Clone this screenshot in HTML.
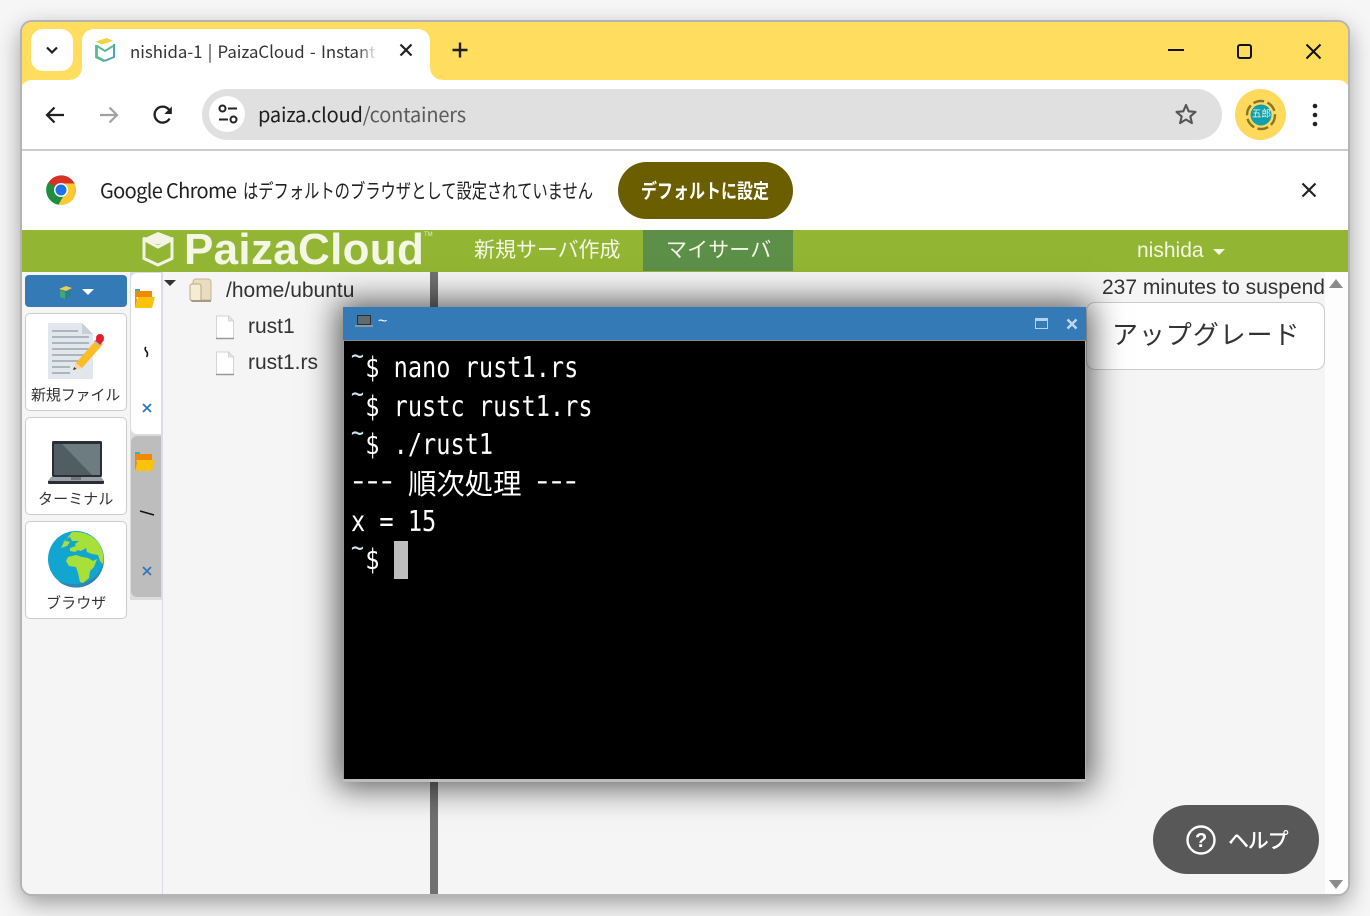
<!DOCTYPE html>
<html lang="ja"><head><meta charset="utf-8"><title>PaizaCloud</title>
<style>
html,body{margin:0;padding:0;width:1370px;height:916px;overflow:hidden;background:#f6f6f6}
*{box-sizing:border-box}
.a{position:absolute}
.t{position:absolute;white-space:nowrap;line-height:1}
.ui{font-family:"Noto Sans CJK JP","Liberation Sans",sans-serif}
.ls{font-family:"Liberation Sans","Noto Sans CJK JP",sans-serif}
.card{position:absolute;left:25px;width:102px;height:98px;background:#fff;border:1px solid #ccc;border-radius:5px}
.term{position:absolute;font-family:"DejaVu Sans Mono",monospace;font-size:28.5px;line-height:1;color:#fff;white-space:pre;transform-origin:0 0;transform:scaleX(.828)}
.tl{display:inline-block;width:17.16px;font-size:26px;position:relative;top:-13.7px;line-height:1;color:#cfe6f2}
.dash{letter-spacing:-5.3px;transform:scaleX(1.2)}
svg{position:absolute;overflow:visible}
</style></head><body>
<div class="a" style="left:21px;top:21px;width:1328px;height:874px;border-radius:11px;box-shadow:0 8px 24px rgba(0,0,0,.38)"></div>
<div class="a" id="win" style="left:20px;top:20px;width:1330px;height:876px;border:2px solid #b4b4b4;border-radius:12px;overflow:hidden;background:#f5f5f5">
<div style="position:absolute;left:-22px;top:-22px;width:1370px;height:916px">

<!-- title bar -->
<div class="a" style="left:20px;top:20px;width:1330px;height:70px;background:#ffdd5e"></div>
<!-- toolbar + infobar -->
<div class="a" style="left:20px;top:80px;width:1330px;height:150px;background:#fff;border-radius:12px 12px 0 0"></div>
<div class="a" style="left:20px;top:149px;width:1330px;height:2px;background:#ccc"></div>

<!-- tab list button -->
<div class="a" style="left:31px;top:29px;width:42px;height:42px;background:#fff;border-radius:12px"></div>
<svg style="left:31px;top:29px" width="42" height="42"><path d="M16 18.5l5 5 5-5" fill="none" stroke="#1f1f1f" stroke-width="2.2"/></svg>
<!-- tab -->
<div class="a" style="left:82px;top:29px;width:348px;height:51px;background:#fff;border-radius:12px 12px 0 0"></div>
<div class="a" style="left:70px;top:68px;width:12px;height:12px;background:radial-gradient(circle at 0 0,#ffdd5e 11.5px,#fff 12px)"></div>
<div class="a" style="left:430px;top:68px;width:12px;height:12px;background:radial-gradient(circle at 100% 0,#ffdd5e 11.5px,#fff 12px)"></div>
<svg style="left:94px;top:37px" width="24" height="26" viewBox="0 0 24 26">
<path d="M2.500 8v12l8 4" fill="none" stroke="#58bd8c" stroke-width="2.800"/>
<path d="M10.500 24l9.500-4V7" fill="none" stroke="#4aa7bb" stroke-width="2"/>
<path d="M3 9l8 5 8-5" fill="none" stroke="#58bd8c" stroke-width="2"/>
<path d="M1.500 4.500L13 1l6 3-11 3.500z" fill="#f2d33c"/>
</svg>
<div class="t ui" style="left:130px;top:43px;font-size:16.800px;word-spacing:1.500px;color:#333;width:247px;overflow:hidden;height:24px;-webkit-mask-image:linear-gradient(90deg,#000 92%,transparent)">nishida-1 | PaizaCloud - Instant Cloud</div>
<svg style="left:398px;top:42px" width="16" height="16"><path d="M2.5 2.5l11 11M13.5 2.5l-11 11" stroke="#1f1f1f" stroke-width="2.2"/></svg>
<svg style="left:452px;top:42px" width="16" height="16"><path d="M8 .5v15M.5 8h15" stroke="#1f1f1f" stroke-width="2.4"/></svg>
<!-- window controls -->
<div class="a" style="left:1168px;top:49px;width:16px;height:2px;background:#111"></div>
<div class="a" style="left:1237px;top:44px;width:15px;height:15px;border:2px solid #111;border-radius:3px"></div>
<svg style="left:1305px;top:43px" width="17" height="17"><path d="M1.5 1.5l14 14M15.5 1.5l-14 14" stroke="#111" stroke-width="2"/></svg>

<!-- nav -->
<svg style="left:44px;top:104px" width="22" height="22"><path d="M20 11H3M10.5 3.5L3 11l7.500 7.500" fill="none" stroke="#1f1f1f" stroke-width="2.200"/></svg>
<svg style="left:98px;top:104px" width="22" height="22"><path d="M2 11h17M11.500 3.500L19 11l-7.500 7.500" fill="none" stroke="#a2a2a2" stroke-width="2.200"/></svg>
<svg style="left:152px;top:104px" width="22" height="22" viewBox="0 0 22 22"><path d="M17.600 14.500A8 8 0 1 1 16.500 5.200L19 7.500" fill="none" stroke="#1f1f1f" stroke-width="2.300"/><path d="M19.800 2.500v7.500h-7.500z" fill="#1f1f1f"/></svg>
<div class="a" style="left:202px;top:89px;width:1020px;height:51px;background:#e0e0e0;border-radius:26px"></div>
<div class="a" style="left:209px;top:96px;width:36px;height:36px;background:#fff;border-radius:50%"></div>
<svg style="left:209px;top:96px" width="36" height="36"><circle cx="13.500" cy="12.500" r="3" fill="none" stroke="#222" stroke-width="2"/><path d="M19 12.500h9M10 23.500h9" stroke="#222" stroke-width="2"/><circle cx="24.500" cy="23.500" r="3" fill="none" stroke="#222" stroke-width="2"/></svg>
<div class="t ui" style="left:258px;top:103.500px;font-size:20px;letter-spacing:-.2px;color:#1f1f1f">paiza.cloud<span style="color:#5c5c5c">/containers</span></div>
<svg style="left:1174px;top:102px" width="24" height="24" viewBox="0 0 24 24"><path d="M12 3l2.700 6.300 6.800.6-5.200 4.500 1.600 6.700L12 17.500l-5.900 3.600 1.600-6.700L2.500 9.900l6.800-.6z" fill="none" stroke="#555" stroke-width="2.100" stroke-linejoin="round"/></svg>
<div class="a" style="left:1235px;top:89px;width:51px;height:51px;background:#ffd95c;border-radius:50%"></div>
<svg style="left:1235px;top:89px" width="51" height="51"><circle cx="26" cy="26" r="14" fill="none" stroke="#8a7328" stroke-width="2.400" stroke-dasharray="11 3.500"/><circle cx="26" cy="26" r="10.500" fill="#0f9fae"/></svg>
<div class="t ui" style="left:1252px;top:109px;font-size:9.500px;color:#e6f5e6">五郎</div>
<svg style="left:1305px;top:102px" width="20" height="26"><circle cx="10" cy="4" r="2.300" fill="#222"/><circle cx="10" cy="13" r="2.300" fill="#222"/><circle cx="10" cy="22" r="2.300" fill="#222"/></svg>

<!-- infobar -->
<svg style="left:46px;top:175px" width="30" height="30" viewBox="0 0 30 30">
<path d="M15 15L2.200 8A15 15 0 0 1 28.600 8.500H15z" fill="#d93025"/>
<path d="M15 15L2.200 7.500A15 15 0 0 0 12.500 29.800L19 19z" fill="#1e8e3e"/>
<path d="M15 8.500h13.600A15 15 0 0 1 12.500 29.800L21 15z" fill="#fcc934"/>
<circle cx="15" cy="15" r="7" fill="#fff"/><circle cx="15" cy="15" r="5.500" fill="#1a73e8"/>
</svg>
<div class="t ui" style="left:100px;top:180px;font-size:20px;color:#202020;letter-spacing:-.65px">Google Chrome</div>
<div class="t ui" style="left:243px;top:180px;font-size:20px;color:#202020;transform-origin:0 0;transform:scaleX(.764)">はデフォルトのブラウザとして設定されていません</div>
<div class="a" style="left:618px;top:162px;width:175px;height:57px;background:#6b5e00;border-radius:29px"></div>
<div class="t ui" style="left:641px;top:180px;font-size:20px;font-weight:700;color:#fff;transform-origin:0 0;transform:scaleX(.8)">デフォルトに設定</div>
<svg style="left:1301px;top:182px" width="16" height="16"><path d="M1.500 1.500l13 13M14.500 1.500l-13 13" stroke="#1f1f1f" stroke-width="2.100"/></svg>

<!-- green navbar -->
<div class="a" style="left:20px;top:230px;width:1330px;height:42px;background:#93b534"></div>
<div class="a" style="left:643px;top:230px;width:150px;height:41px;background:#5c8f47"></div>
<svg style="left:142px;top:231px" width="32" height="36" viewBox="0 0 32 36">
<path d="M16 12L2 7.500v20L16 34l14-6.500v-20z" fill="none" stroke="#f2f5e4" stroke-width="3" stroke-linejoin="round"/>
<path d="M2 7.500L16 1l13 5-13 6.500z" fill="#f2f5e4"/>
<path d="M3 9l13 7 13-7" fill="none" stroke="#f2f5e4" stroke-width="3"/>
</svg>
<div class="t ls" style="left:184px;top:227.500px;font-size:44px;font-weight:700;color:#f4f6e6;letter-spacing:.3px">PaizaCloud</div>
<div class="t ls" style="left:424px;top:232px;font-size:6px;color:#e6ecc8">TM</div>
<div class="t ui" style="left:474px;top:239px;font-size:21px;color:#f4f6e6;letter-spacing:-.05px">新規サーバ作成</div>
<div class="t ui" style="left:666px;top:239px;font-size:21px;color:#f4f6e6;letter-spacing:.1px">マイサーバ</div>
<div class="t ls" style="left:1137px;top:239.500px;font-size:21px;color:#f4f6e6">nishida</div>
<div class="a" style="left:1213px;top:249px;border:6px solid transparent;border-top:6px solid #f4f6e6;border-bottom:0"></div>

<!-- content -->
<div class="a" style="left:20px;top:272px;width:1330px;height:630px;background:#f5f5f5"></div>
<div class="a" style="left:1325px;top:272px;width:25px;height:630px;background:#fdfdfd"></div>
<div class="a" style="left:162px;top:272px;width:1px;height:630px;background:#dcdce8"></div>
<div class="a" style="left:430px;top:272px;width:8px;height:630px;background:#707070"></div>

<!-- left menu -->
<div class="a" style="left:25px;top:275px;width:102px;height:32px;background:#337ab7;border-radius:4px"></div>
<svg style="left:58px;top:284px" width="16" height="16"><path d="M1 5l7-3 6 2-6 3z" fill="#e8d24a"/><path d="M2 6l5 2v7l-5-2z" fill="#3fa873"/><path d="M8 8l5-2v6l-5 3z" fill="#2c7f8f"/></svg>
<div class="a" style="left:82px;top:289px;border:6px solid transparent;border-top:6px solid #fff;border-bottom:0"></div>

<div class="card" style="top:313px"></div>
<svg style="left:48px;top:323px" width="56" height="56" viewBox="0 0 56 56">
<path d="M0 0h34l11 11v45H0z" fill="#e1e7ec"/><path d="M34 0l11 11H34z" fill="#c5d0d8"/>
<g stroke="#99a6ae" stroke-width="1.500"><path d="M4 8h26M4 14h37M4 20h37M4 26h37M4 32h37M4 38h26M4 44h18M4 50h18"/></g>
<path d="M25 47l3-7 21-24 6 5-21 24z" fill="#fbbc24"/><path d="M25 47l3-7 6 5z" fill="#f5d3ae"/><path d="M25 47l1.200-3 2.300 2z" fill="#333"/>
<path d="M47 18l4-5 5 4-4 5z" fill="#e2202c"/><circle cx="52" cy="15" r="4" fill="#e2202c"/><path d="M46 18l5 4" stroke="#bbb" stroke-width="2"/>
</svg>
<div class="t ui" style="left:31px;top:387px;font-size:15px;color:#333;letter-spacing:-.15px">新規ファイル</div>

<div class="card" style="top:417px"></div>
<svg style="left:48px;top:440px" width="56" height="44" viewBox="0 0 56 44">
<rect x="4" y="1" width="50" height="36" rx="1.500" fill="#2c2d36"/>
<rect x="6" y="4" width="46" height="31" fill="#505d62"/><path d="M14 4h38v31H44z" fill="#6d7c80"/>
<path d="M3 37h50l3 4a2 2 0 0 1-2 2H2a2 2 0 0 1-2-2z" fill="#9aa1a6"/><path d="M0 41h56v2a1 1 0 0 1-1 1H1a1 1 0 0 1-1-1z" fill="#2c2d36"/><rect x="23" y="37" width="10" height="3" fill="#70767a"/>
</svg>
<div class="t ui" style="left:38px;top:491px;font-size:15px;color:#333;letter-spacing:.1px">ターミナル</div>

<div class="card" style="top:521px"></div>
<svg style="left:48px;top:531px" width="56" height="56" viewBox="0 0 56 56">
<circle cx="28" cy="28" r="28" fill="#12a5cf"/>
<path d="M10 50A28 28 0 0 0 56 28c-2 14-12 24-28 25-7 .3-13-1-18-3z" fill="#2c86b8"/>
<path d="M24 1c10-1 22 3 28 13 3 6 4 12 3 19l-3-3-2-6-6-1-5-2-1-4-5 3-4-1-2-6 4-3-7 0-2-4-4 2-3 3 4-1 3 1-3 4-6 2 3-6z" fill="#a8e03a"/>
<path d="M20 26l8-2 6 2 6 1 5 3 4-2-3 8-4 4-1 7-6 5-3-1-2-9-2-6-7-1-3-5z" fill="#a8e03a"/>
<path d="M22 17l6-2 3 3-4 3-5-1z" fill="#a8e03a"/>
</svg>
<div class="t ui" style="left:46px;top:595px;font-size:15px;color:#333;letter-spacing:.1px">ブラウザ</div>

<!-- vertical tabs -->
<div class="a" style="left:130px;top:272px;width:32px;height:328px;background:#dcdcdc"></div>
<div class="a" style="left:131px;top:273px;width:30px;height:161px;background:#fff;border-radius:6px 0 0 6px"></div>
<div class="a" style="left:131px;top:436px;width:30px;height:161px;background:#bdbdbd;border-radius:6px 0 0 6px"></div>
<svg style="left:135px;top:288px" width="20" height="22" viewBox="0 0 20 22"><path d="M0 1h5v3H0z" fill="#2bb4d0"/><path d="M0 3h17v6H0z" fill="#ee8b00"/><path d="M0 20l3-11h17l-3 11z" fill="#fcc20a"/><path d="M0 4v16l2-8z" fill="#ee8b00"/></svg>
<svg style="left:135px;top:451px" width="20" height="22" viewBox="0 0 20 22"><path d="M0 1h5v3H0z" fill="#2bb4d0"/><path d="M0 3h17v6H0z" fill="#ee8b00"/><path d="M0 20l3-11h17l-3 11z" fill="#fcc20a"/><path d="M0 4v16l2-8z" fill="#ee8b00"/></svg>
<svg style="left:140px;top:345px" width="12" height="14"><path d="M6 2C4.500 3.500 5 5 6.500 6.500S8 9.500 6.500 12" fill="none" stroke="#111" stroke-width="1.600"/></svg>
<svg style="left:138px;top:508px" width="18" height="14"><path d="M2 3l14 4" stroke="#111" stroke-width="1.500"/></svg>
<svg style="left:142px;top:403px" width="10" height="10"><path d="M1 1l8 8M9 1L1 9" stroke="#337ab7" stroke-width="1.900"/></svg>
<svg style="left:142px;top:566px" width="10" height="10"><path d="M1 1l8 8M9 1L1 9" stroke="#337ab7" stroke-width="1.900"/></svg>

<!-- file tree -->
<div class="a" style="left:164px;top:280px;border:6.500px solid transparent;border-top:6.500px solid #333;border-bottom:0"></div>
<svg style="left:189px;top:277px" width="25" height="27" viewBox="0 0 25 27">
<path d="M4 5a3 3 0 0 1 3-3h12a3 3 0 0 1 3 3v18H4z" fill="#e9dcc0" stroke="#c4b494"/>
<path d="M1 22V9a2 2 0 0 1 2-2h7a2 2 0 0 1 2 2v15H3z" fill="#f5ecd6" stroke="#bba983"/>
<path d="M12 23h10v2H3l-2-2z" fill="#a89a80"/>
</svg>
<div class="t ls" style="left:226px;top:279.500px;font-size:21px;color:#333">/home/ubuntu</div>
<svg style="left:215px;top:315px" width="20" height="25" viewBox="0 0 20 25"><path d="M1.500 1h12l5 5v17.500h-17z" fill="#fff" stroke="#d4d4d4"/><path d="M13.500 1l5 5h-5z" fill="#e8e8e8" stroke="#d4d4d4"/><path d="M1 23.500h18" stroke="#999" stroke-width="1.500"/></svg>
<svg style="left:215px;top:351px" width="20" height="25" viewBox="0 0 20 25"><path d="M1.500 1h12l5 5v17.500h-17z" fill="#fff" stroke="#d4d4d4"/><path d="M13.500 1l5 5h-5z" fill="#e8e8e8" stroke="#d4d4d4"/><path d="M1 23.500h18" stroke="#999" stroke-width="1.500"/></svg>
<div class="t ls" style="left:248px;top:315.500px;font-size:21px;color:#333">rust1</div>
<div class="t ls" style="left:248px;top:351.500px;font-size:21px;color:#333">rust1.rs</div>

<!-- right top -->
<div class="t ls" style="left:1102px;top:277px;font-size:21px;color:#333">237 minutes to suspend</div>
<div class="a" style="left:1086px;top:302px;width:239px;height:68px;background:#fff;border:1px solid #ccc;border-radius:9px"></div>
<div class="t ui" style="left:1112px;top:321px;font-size:26px;color:#333;letter-spacing:.9px">アップグレード</div>
<div class="a" style="left:1329px;top:279px;border:7.500px solid transparent;border-bottom:9px solid #8a8a8a;border-top:0"></div>
<div class="a" style="left:1329px;top:880px;border:7.500px solid transparent;border-top:9px solid #8a8a8a;border-bottom:0"></div>

<!-- help -->
<div class="a" style="left:1153px;top:805px;width:166px;height:69px;background:#585858;border-radius:35px"></div>
<svg style="left:1186px;top:825px" width="30" height="30"><circle cx="15" cy="15" r="13.500" fill="none" stroke="#fff" stroke-width="2.400"/></svg>
<div class="t ls" style="left:1195px;top:830.500px;font-size:20px;font-weight:700;color:#fff">?</div>
<div class="t ui" style="left:1228px;top:829.500px;font-size:21px;font-weight:500;color:#fff;letter-spacing:-1.200px">ヘルプ</div>

<!-- terminal window -->
<div class="a" style="left:343px;top:307px;width:743px;height:475px;background:#000;box-shadow:0 0 30px 6px rgba(0,0,0,.62)"></div>
<div class="a" style="left:343px;top:307px;width:743px;height:34px;background:#337ab7;border-bottom:1px solid #8c8c8c"></div>
<div class="a" style="left:343px;top:341px;width:1px;height:441px;background:#999"></div>
<div class="a" style="left:1085px;top:341px;width:1px;height:441px;background:#b0b0b0"></div>
<div class="a" style="left:343px;top:779px;width:743px;height:3px;background:#bdbdbd"></div>
<svg style="left:355px;top:315px" width="18" height="14"><rect x="2" y="0" width="14" height="10" fill="#2c2d36"/><rect x="3" y="1" width="12" height="8" fill="#5e6c70"/><rect x="0" y="10" width="18" height="2" fill="#8d979c"/></svg>
<div class="t ls" style="left:378px;top:314px;font-size:16px;color:#fff">~</div>
<div class="a" style="left:1035px;top:318px;width:13px;height:11px;border:1.500px solid #b9d0e6;border-top-width:3px"></div>
<svg style="left:1066px;top:318px" width="12" height="12"><path d="M1.500 1.500l9 9M10.500 1.500l-9 9" stroke="#c4d8ea" stroke-width="2.400"/></svg>

<div class="term" style="left:351px;top:354.400px"><span class="tl">~</span>$ nano rust1.rs</div>
<div class="term" style="left:351px;top:392.900px"><span class="tl">~</span>$ rustc rust1.rs</div>
<div class="term" style="left:351px;top:431.200px"><span class="tl">~</span>$ ./rust1</div>
<div class="term dash" style="left:347.800px;top:467px">---</div>
<div class="t" style="left:408px;top:469px;font-size:28.400px;color:#fff;font-family:'WenQuanYi Zen Hei','Noto Sans CJK JP',sans-serif">順次処理</div>
<div class="term dash" style="left:532.400px;top:467px">---</div>
<div class="term" style="left:351px;top:507.900px">x = 15</div>
<div class="term" style="left:351px;top:546.400px"><span class="tl">~</span>$</div>
<div class="a" style="left:394px;top:541px;width:14px;height:38px;background:#bdbdbd"></div>

</div></div>
</body></html>
